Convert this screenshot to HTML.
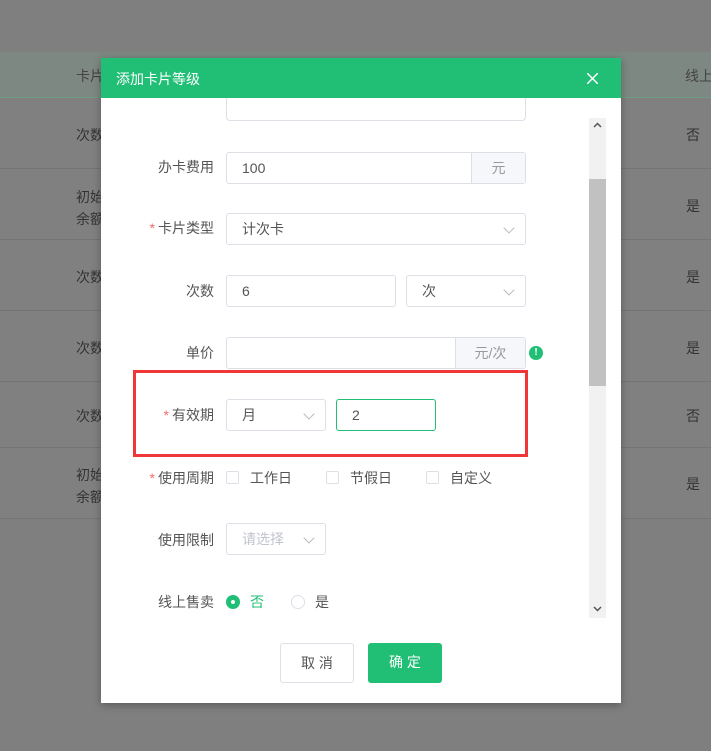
<!DOCTYPE html>
<html><head><meta charset="utf-8"><style>
*{box-sizing:border-box;margin:0;padding:0}
body{width:711px;height:751px;background:#7f7f7f;font-family:"Liberation Sans","Noto Sans CJK SC",sans-serif;font-size:14px;color:#333;position:relative;overflow:hidden}
.a{position:absolute;white-space:nowrap}
.hd{left:0;top:52px;width:711px;height:46px;background:#7e8882;border-bottom:1px solid #6f9c80}
.row{left:0;width:711px;border-bottom:1px solid #747474;background:#808080}
.t{color:#333;font-size:14px}
.modal{left:101px;top:58px;width:520px;height:645px;background:#fff;box-shadow:0 2px 8px rgba(0,0,0,.3)}
.mh{left:0;top:0;width:520px;height:40px;background:#20bf75;color:#fff;font-size:14px;padding:11px 15px}
.lbl{font-size:14px;color:#555;text-align:right;width:113px;left:0;line-height:20px}
.st{color:#f56c6c;margin-right:3px}
.inp{border:1px solid #dcdfe6;border-radius:3px;height:32px;font-size:14px;color:#555;padding:0 15px;line-height:30px;background:#fff}
.app{background:#f5f7fa;border-left:1px solid #dcdfe6;color:#999;text-align:center;line-height:30px}
.arr{position:absolute;right:12px;top:10px;width:8px;height:8px;border-right:1px solid #bbb;border-bottom:1px solid #bbb;transform:rotate(45deg)}
.cb{width:13px;height:13px;border:1px solid #dcdfe6;border-radius:2px}
.btn{border-radius:3px;height:40px;font-size:14px;text-align:center;line-height:38px}
</style></head><body>
<div class="a hd"></div>
<div class="a t" style="left:76px;top:66px;color:#444">卡片</div>
<div class="a t" style="left:685px;top:66px;color:#444">线上</div>
<div class="a row" style="top:98px;height:71px"></div>
<div class="a row" style="top:169px;height:71px"></div>
<div class="a row" style="top:240px;height:71px"></div>
<div class="a row" style="top:311px;height:71px"></div>
<div class="a row" style="top:382px;height:66px"></div>
<div class="a row" style="top:448px;height:71px"></div>
<div class="a t" style="left:76px;top:125px">次数</div><div class="a t" style="left:686px;top:125px">否</div>
<div class="a t" style="left:76px;top:186px;line-height:22px">初始<br>余额</div><div class="a t" style="left:686px;top:196px">是</div>
<div class="a t" style="left:76px;top:267px">次数</div><div class="a t" style="left:686px;top:267px">是</div>
<div class="a t" style="left:76px;top:338px">次数</div><div class="a t" style="left:686px;top:338px">是</div>
<div class="a t" style="left:76px;top:406px">次数</div><div class="a t" style="left:686px;top:406px">否</div>
<div class="a t" style="left:76px;top:464px;line-height:22px">初始<br>余额</div><div class="a t" style="left:686px;top:474px">是</div>

<div class="a modal">
<div class="a mh">添加卡片等级</div>
<svg class="a" style="left:486px;top:15px" width="11" height="11"><path d="M0 0L11 11M11 0L0 11" stroke="#fff" stroke-width="1.5"/></svg>
<div class="a" style="left:125px;top:40px;width:300px;height:23px;border:1px solid #dcdfe6;border-top:none;border-radius:0 0 4px 4px"></div>

<div class="a lbl" style="top:99px">办卡费用</div>
<div class="a inp" style="left:125px;top:94px;width:300px">100</div>
<div class="a app" style="left:370px;top:95px;width:54px;height:30px">元</div>

<div class="a lbl" style="top:160px"><span class="st">*</span>卡片类型</div>
<div class="a inp" style="left:125px;top:155px;width:300px">计次卡<i class="arr"></i></div>

<div class="a lbl" style="top:223px">次数</div>
<div class="a inp" style="left:125px;top:217px;width:170px">6</div>
<div class="a inp" style="left:305px;top:217px;width:120px">次<i class="arr"></i></div>

<div class="a lbl" style="top:285px">单价</div>
<div class="a inp" style="left:125px;top:279px;width:300px"></div>
<div class="a app" style="left:354px;top:280px;width:70px;height:30px">元/次</div>
<div class="a" style="left:428px;top:288px;width:14px;height:14px;border-radius:50%;background:#20bf75;color:#fff;font-size:10px;font-weight:bold;text-align:center;line-height:14px">!</div>

<div class="a" style="left:32px;top:312px;width:395px;height:87px;border:3px solid #f03737"></div>
<div class="a lbl" style="top:347px"><span class="st">*</span>有效期</div>
<div class="a inp" style="left:125px;top:341px;width:100px">月<i class="arr"></i></div>
<div class="a inp" style="left:235px;top:341px;width:100px;border-color:#20bf75">2</div>

<div class="a lbl" style="top:410px"><span class="st">*</span>使用周期</div>
<div class="a cb" style="left:125px;top:413px"></div><div class="a" style="left:149px;top:410px;color:#555;line-height:20px">工作日</div>
<div class="a cb" style="left:225px;top:413px"></div><div class="a" style="left:249px;top:410px;color:#555;line-height:20px">节假日</div>
<div class="a cb" style="left:325px;top:413px"></div><div class="a" style="left:349px;top:410px;color:#555;line-height:20px">自定义</div>

<div class="a lbl" style="top:472px">使用限制</div>
<div class="a inp" style="left:125px;top:465px;width:100px;color:#c0c4cc">请选择<i class="arr"></i></div>

<div class="a lbl" style="top:534px">线上售卖</div>
<div class="a" style="left:125px;top:537px;width:14px;height:14px;border-radius:50%;background:#20bf75"><div class="a" style="left:5px;top:5px;width:4px;height:4px;border-radius:50%;background:#fff"></div></div>
<div class="a" style="left:149px;top:534px;color:#20bf75;line-height:20px">否</div>
<div class="a" style="left:190px;top:537px;width:14px;height:14px;border-radius:50%;border:1px solid #dcdfe6"></div>
<div class="a" style="left:214px;top:534px;color:#555;line-height:20px">是</div>

<div class="a" style="left:488px;top:60px;width:17px;height:500px;background:#f1f1f1"></div>
<div class="a" style="left:488px;top:121px;width:17px;height:207px;background:#c1c1c1"></div>
<svg class="a" style="left:492px;top:64px" width="9" height="6"><path d="M1 5L4.5 1.5L8 5" stroke="#555" stroke-width="1.5" fill="none"/></svg>
<svg class="a" style="left:492px;top:548px" width="9" height="6"><path d="M1 1L4.5 4.5L8 1" stroke="#555" stroke-width="1.5" fill="none"/></svg>

<div class="a btn" style="left:179px;top:585px;width:74px;border:1px solid #dcdfe6;color:#555">取 消</div>
<div class="a btn" style="left:267px;top:585px;width:74px;background:#20bf75;color:#fff">确 定</div>
</div>
</body></html>
